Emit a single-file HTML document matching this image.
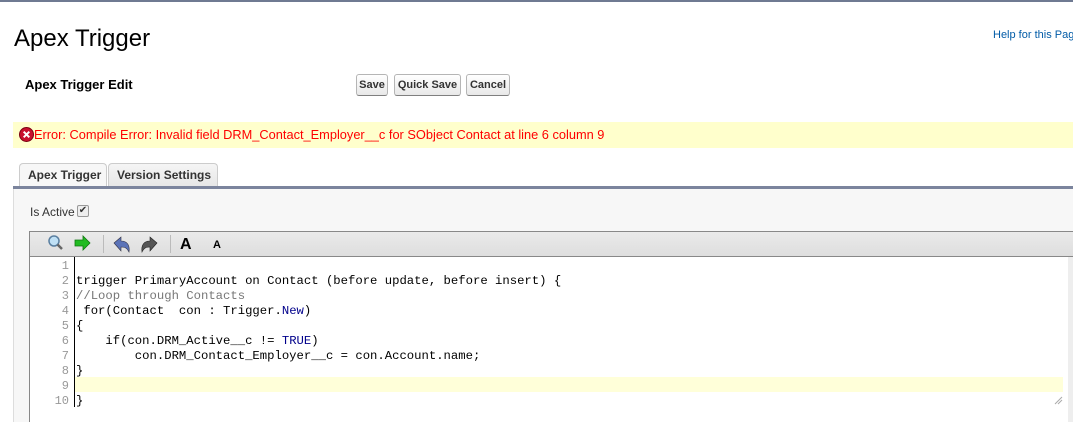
<!DOCTYPE html>
<html><head><style>
*{margin:0;padding:0;box-sizing:border-box}
body{width:1073px;height:422px;overflow:hidden;background:#fff;font-family:"Liberation Sans",Arial,sans-serif;position:relative}
.a{position:absolute}
.btn{position:absolute;top:74px;height:22px;border:1px solid #b5b5b5;border-bottom-color:#7f7f7f;border-radius:3px;background:linear-gradient(#fff,#e8e8e8);font-size:11px;font-weight:bold;color:#333;text-align:center;line-height:20px}
.tab{position:absolute;top:163px;height:24px;border:1px solid #ccc;border-bottom:none;border-radius:4px 4px 0 0;font-size:12px;font-weight:bold;color:#333;line-height:23px;padding-left:8px}
.code{font-family:"Liberation Mono",monospace;font-size:12.25px;line-height:15px;white-space:pre;color:#000}
.ln{position:absolute;left:30px;width:39px;text-align:right;color:#999;font-family:"Liberation Mono",monospace;font-size:12px;line-height:15px}
.kw{color:#00008b}.cm{color:#777}
</style></head><body>
<div class="a" style="left:0;top:0;width:1073px;height:2px;background:#6f7a92"></div>
<div class="a" style="left:14px;top:25px;font-size:24px;color:#000">Apex Trigger</div>
<div class="a" style="left:993px;top:29px;font-size:11px;color:#015ba7;white-space:nowrap">Help for this Page</div>
<div class="a" style="left:25px;top:77px;font-size:13px;font-weight:bold;color:#000">Apex Trigger Edit</div>
<div class="btn" style="left:356px;width:32px">Save</div>
<div class="btn" style="left:394px;width:67px">Quick Save</div>
<div class="btn" style="left:466px;width:44px">Cancel</div>
<div class="a" style="left:13px;top:122px;width:1060px;height:26px;background:#ffffcc"></div>
<svg class="a" style="left:19px;top:127px" width="15" height="15" viewBox="0 0 15 15"><circle cx="7.5" cy="7.5" r="7" fill="#c8102e" stroke="#7a0010"/><path d="M4.7 4.7L10.3 10.3M10.3 4.7L4.7 10.3" stroke="#fff" stroke-width="2"/></svg>
<div class="a" style="left:34px;top:127px;font-size:12.8px;color:#f00;white-space:nowrap">Error: Compile Error: Invalid field DRM_Contact_Employer__c for SObject Contact at line 6 column 9</div>
<div class="tab" style="left:19px;width:88px;background:#f7f7f7;height:26px">Apex Trigger</div>
<div class="tab" style="left:108px;width:110px;background:linear-gradient(#f5f5f5,#e6e6e6)">Version Settings</div>
<div class="a" style="left:13px;top:186px;width:1060px;height:3px;background:#7b849d"></div>
<div class="a" style="left:13px;top:189px;width:1060px;height:233px;background:#f7f7f7;border-left:1px solid #ddd"></div>
<div class="a" style="left:30px;top:205px;font-size:12px;color:#333">Is Active</div>
<div class="a" style="left:77px;top:205px;width:12px;height:12px;border:1px solid #999;background:#eee;border-radius:2px;font-size:10px;line-height:10px;text-align:center;color:#333">✔</div>
<div class="a" style="left:29px;top:231px;width:1044px;height:26px;border:1px solid #888;border-right:none;background:linear-gradient(#eaeaea,#dedede)"></div>
<svg class="a" style="left:46px;top:234px" width="180" height="20">
<circle cx="8" cy="7" r="5" fill="#bfe0f5" stroke="#5a7fa0" stroke-width="1.5"/><path d="M11.5 10.5L16 15" stroke="#666" stroke-width="2.5"/>
<path d="M29 6h8v-4l7 7-7 7v-4h-8z" fill="#22bb22" stroke="#117711" stroke-width=".8"/>
<line x1="57.5" y1="1" x2="57.5" y2="19" stroke="#bbb"/>
<path d="M68 9l7-6v4c6 0 9 4 8 11-2-4-4-5-8-5v4z" fill="#5b73b8" stroke="#334" stroke-width=".6"/>
<path d="M111 9l-7-6v4c-6 0-9 4-8 11 2-4 4-5 8-5v4z" fill="#555" stroke="#222" stroke-width=".6"/>
<line x1="124.5" y1="1" x2="124.5" y2="19" stroke="#bbb"/>
<text x="134" y="15" font-family="Liberation Sans" font-weight="bold" font-size="16">A</text>
<text x="167" y="14" font-family="Liberation Sans" font-weight="bold" font-size="11">A</text>
</svg>
<div class="a" style="left:29px;top:257px;width:1040px;height:165px;background:#fff;border-left:1px solid #888"></div>
<div class="a" style="left:1068px;top:257px;width:5px;height:165px;background:#eee"></div>
<div class="a" style="left:74px;top:257px;width:1px;height:150px;background:#000"></div>
<div class="a" style="left:75px;top:377px;width:988px;height:15px;background:#ffffd9"></div>
<div class="ln" style="top:259px">1<br>2<br>3<br>4<br>5<br>6<br>7<br>8<br>9<br>10</div>
<div class="a code" style="left:76px;top:259px">
trigger PrimaryAccount on Contact (before update, before insert) {
<span class="cm">//Loop through Contacts</span>
 for(Contact  con : Trigger.<span class="kw">New</span>)
{
    if(con.DRM_Active__c != <span class="kw">TRUE</span>)
        con.DRM_Contact_Employer__c = con.Account.name;
}

}</div>
<svg class="a" style="left:1054px;top:396px" width="9" height="9"><path d="M1 8L8 1M4 8L8 4" stroke="#aaa"/></svg>
</body></html>
